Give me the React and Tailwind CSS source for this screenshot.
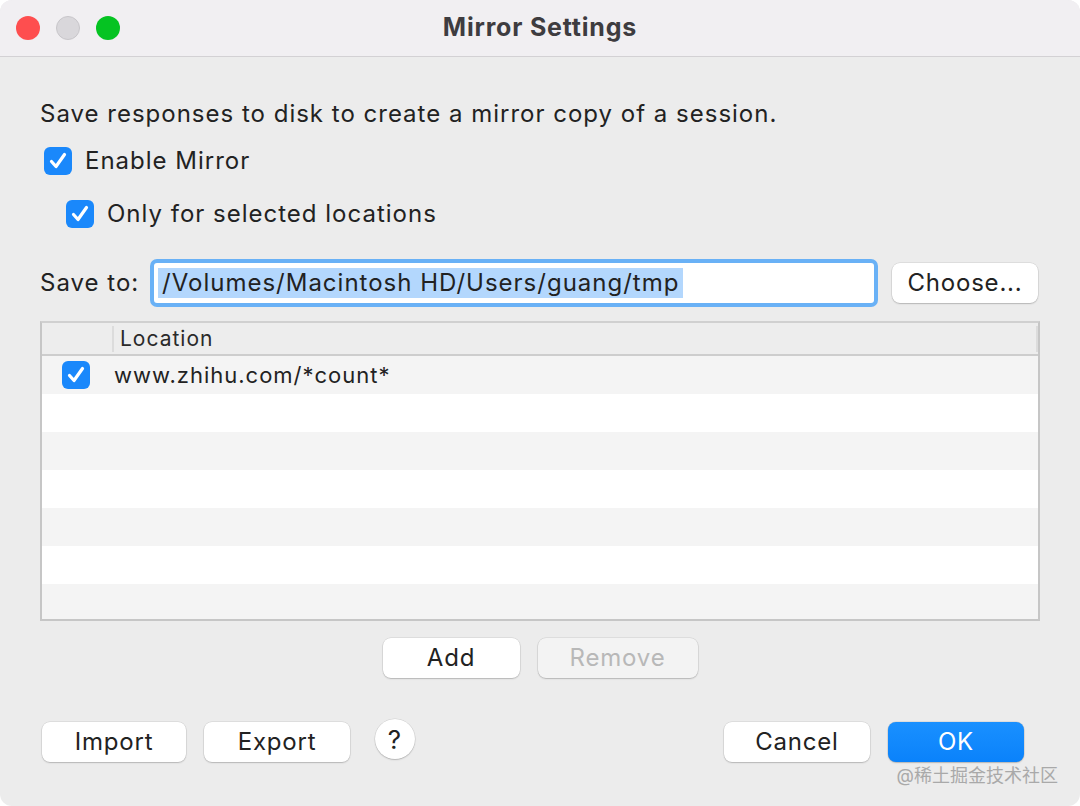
import React from 'react';

const font = { fontFamily: 'Inter, "Noto Sans", "Noto Sans CJK SC", sans-serif' };

function Check({ className = '' }) {
  return (
    <span className={`flex h-[28px] w-[28px] shrink-0 items-center justify-center rounded-[6px] bg-[#1a88fb] ${className}`}>
      <svg width="22" height="22" viewBox="0 0 22 22" fill="none">
        <path d="M4.5 11.5l4.5 5 8.5-12" stroke="#fff" strokeWidth="3.2" strokeLinecap="round" strokeLinejoin="round" />
      </svg>
    </span>
  );
}

function Button({ children, className = '', disabled }) {
  return (
    <button
      className={`flex h-[40px] items-center justify-center rounded-[8px] text-[24px] tracking-[0.8px] shadow-[0_0_0_0.5px_rgba(0,0,0,0.12),0_1px_1.5px_rgba(0,0,0,0.18)] ${
        disabled ? 'bg-[#f3f3f3] text-[#b8b8b8] shadow-[0_0_0_0.5px_rgba(0,0,0,0.06)]' : 'bg-white text-[#222]'
      } ${className}`}
    >
      {children}
    </button>
  );
}

export default function App() {
  const rows = [0, 1, 2, 3, 4, 5, 6];

  return (
    <div className="h-[806px] w-[1080px] bg-white" style={font}>
      <div className="flex h-full w-full flex-col overflow-hidden rounded-[12px] bg-[#ececec] text-[#222]">
        {/* title bar */}
        <div className="grid h-[57px] shrink-0 grid-cols-[1fr_auto_1fr] items-center border-b border-[#d3d1d4] bg-[#f1eff2]">
          <div className="flex items-center gap-[16px] pl-[16px]">
            <span className="h-[24px] w-[24px] rounded-full bg-[#fe4e4f]" />
            <span className="h-[24px] w-[24px] rounded-full border border-[#c8c6ca] bg-[#d9d7db]" />
            <span className="h-[24px] w-[24px] rounded-full bg-[#05c322]" />
          </div>
          <div className="text-[25px] font-bold tracking-[0.8px] text-[#3e3c40]">Mirror Settings</div>
          <div />
        </div>

        <div className="flex flex-1 flex-col px-[40px] tracking-[1px]">
          <p className="mt-[42px] text-[24px] leading-[30px]">Save responses to disk to create a mirror copy of a session.</p>

          <label className="mt-[17px] flex items-center gap-[13px] pl-[4px]">
            <Check />
            <span className="text-[24px] leading-[30px]">Enable Mirror</span>
          </label>

          <label className="mt-[23px] flex items-center gap-[13px] pl-[26px]">
            <Check />
            <span className="text-[24px] leading-[30px]">Only for selected locations</span>
          </label>

          {/* save to */}
          <div className="mt-[30px] flex items-center">
            <span className="w-[110px] text-[24px]">Save to:</span>
            <div className="h-[48px] w-[728px] rounded-[7px] bg-[#69b1f6] p-[4px]">
              <div className="flex h-full items-center rounded-[3px] bg-white px-[4px]">
                <span className="bg-[#b3d7fd] px-[4px] text-[24px] leading-[30px]">/Volumes/Macintosh HD/Users/guang/tmp</span>
              </div>
            </div>
            <Button className="ml-[14px] w-[146px]">Choose...</Button>
          </div>

          {/* table */}
          <div className="mt-[14px] flex h-[300px] flex-col overflow-hidden border-2 border-[#c6c6c6] border-t-[#d0d0d0]">
            <div className="flex h-[33px] shrink-0 items-center border-b-2 border-[#cdcdcd] bg-[#ededed]">
              <span className="ml-[70px] h-[26px] w-[2px] bg-[#dcdcdc]" />
              <span className="ml-[6px] text-[21px] text-[#2a2a2a]">Location</span>
              <span className="ml-auto h-[26px] w-[2px] bg-[#dcdcdc]" />
            </div>
            {rows.map((i) => (
              <div key={i} className={`flex h-[38px] shrink-0 items-center ${i % 2 === 0 ? 'bg-[#f4f4f4]' : 'bg-white'}`}>
                {i === 0 && (
                  <>
                    <Check className="ml-[20px]" />
                    <span className="ml-[24px] text-[22px]">www.zhihu.com/*count*</span>
                  </>
                )}
              </div>
            ))}
          </div>

          <div className="mt-[17px] flex justify-center gap-[18px]">
            <Button className="w-[137px]">Add</Button>
            <Button className="w-[160px]" disabled>Remove</Button>
          </div>

          {/* footer */}
          <div className="mt-[44px] flex items-center">
            <Button className="ml-[2px] w-[144px]">Import</Button>
            <Button className="ml-[18px] w-[146px]">Export</Button>
            <button className="ml-[25px] -mt-[6px] flex h-[40px] w-[40px] items-center justify-center rounded-full bg-white text-[26px] text-[#222] shadow-[0_0_0_0.5px_rgba(0,0,0,0.12),0_1px_1.5px_rgba(0,0,0,0.18)]">
              ?
            </button>
            <Button className="ml-auto w-[146px]">Cancel</Button>
            <Button className="ml-[18px] mr-[16px] w-[136px] bg-gradient-to-b from-[#1990ff] to-[#0a82fb] !text-white">OK</Button>
          </div>
          <div className="-mr-[18px] mt-[2px] self-end text-[18px] leading-[24px] tracking-normal text-[#a9a9a9]">@稀土掘金技术社区</div>
        </div>
      </div>
    </div>
  );
}
